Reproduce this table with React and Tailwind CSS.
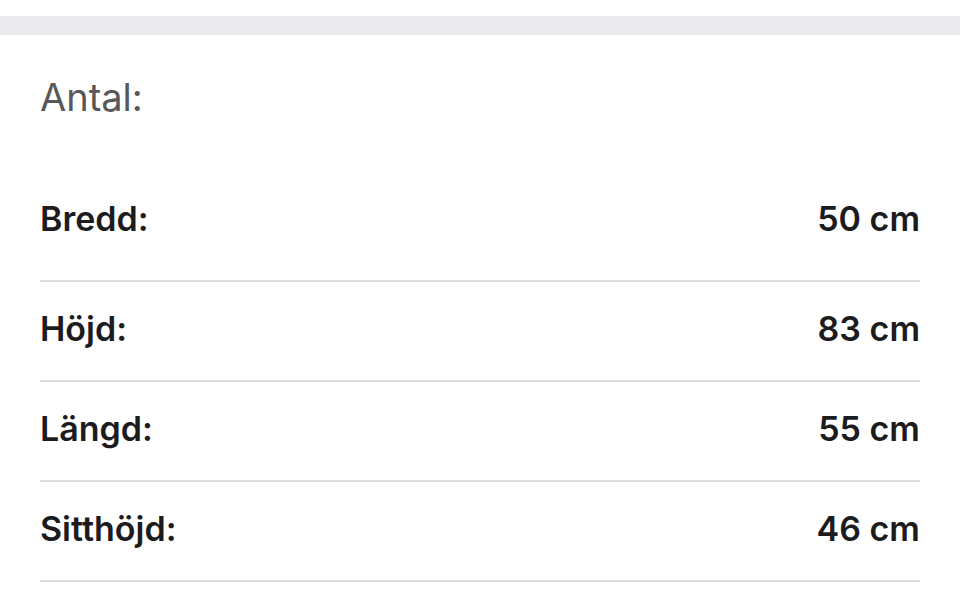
import React from 'react'

const rows = [
    { label: 'Bredd:', value: '50 cm' },
    { label: 'Höjd:', value: '83 cm' },
    { label: 'Längd:', value: '55 cm' },
    { label: 'Sitthöjd:', value: '46 cm' },
]

const App = () => {
    return (
        <div className="w-[960px] h-[603px] bg-white overflow-hidden" style={{ fontFamily: 'Inter, "Noto Sans", sans-serif' }}>
            <div className="h-4 bg-white" />
            <div className="h-[19px] bg-[#e9e9ee]" />

            <div className="px-10">
                <div className="pt-[43px] h-[147px]">
                    <div className="text-[38px] leading-[38px] text-[#585858]">Antal:</div>
                </div>

                {rows.map((row, i) => (
                    <div
                        key={row.label}
                        className={
                            i === 0
                                ? 'h-[100px] pt-[20px] border-b-2 border-[#dcdcdc] flex justify-between items-start'
                                : 'h-[100px] pt-[30px] border-b-2 border-[#dcdcdc] flex justify-between items-start'
                        }
                    >
                        <div className="text-[34px] leading-[34px] font-semibold text-[#1c1c1e]">{row.label}</div>
                        <div className="text-[34px] leading-[34px] font-semibold text-[#1c1c1e]">{row.value}</div>
                    </div>
                ))}
            </div>
        </div>
    )
}

export default App
